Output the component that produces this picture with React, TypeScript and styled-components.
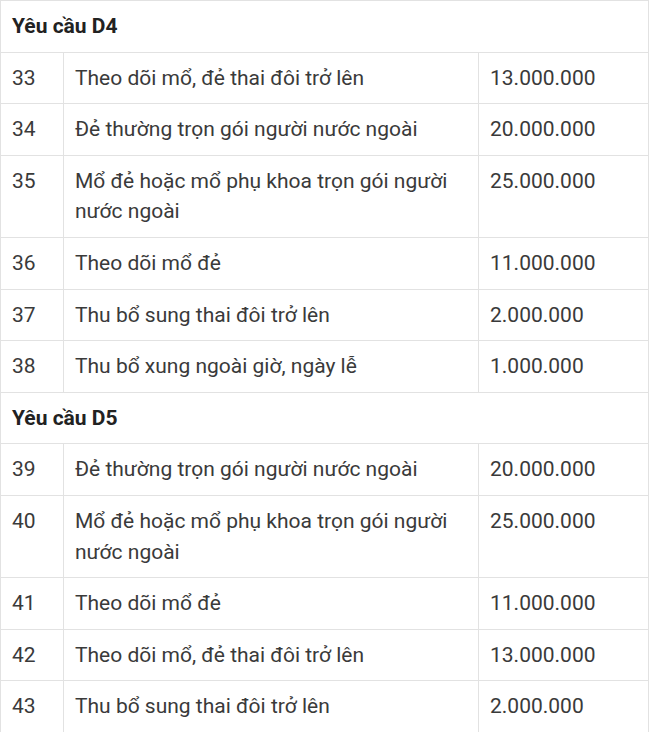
import styled, { createGlobalStyle } from "styled-components";

const GlobalStyle = createGlobalStyle`
  html, body {
    margin: 0;
    padding: 0;
    background: #fff;
  }
`;

const Table = styled.table`
  width: 649px;
  border-collapse: collapse;
  font-family: Roboto, "Noto Sans", sans-serif;
  font-size: 21px;
  line-height: 30.6px;
  color: #3a3a3a;
  table-layout: fixed;
`;

const Cell = styled.td`
  border: 1px solid #e2e2e2;
  padding: 10px 11px;
  vertical-align: top;
  text-align: left;
`;

const GroupCell = styled(Cell)`
  font-weight: 700;
  color: #222;
`;

type Row = [string, string, string];

const groups: { title: string; rows: Row[] }[] = [
  {
    title: "Yêu cầu D4",
    rows: [
      ["33", "Theo dõi mổ, đẻ thai đôi trở lên", "13.000.000"],
      ["34", "Đẻ thường trọn gói người nước ngoài", "20.000.000"],
      ["35", "Mổ đẻ hoặc mổ phụ khoa trọn gói người nước ngoài", "25.000.000"],
      ["36", "Theo dõi mổ đẻ", "11.000.000"],
      ["37", "Thu bổ sung thai đôi trở lên", "2.000.000"],
      ["38", "Thu bổ xung ngoài giờ, ngày lễ", "1.000.000"],
    ],
  },
  {
    title: "Yêu cầu D5",
    rows: [
      ["39", "Đẻ thường trọn gói người nước ngoài", "20.000.000"],
      ["40", "Mổ đẻ hoặc mổ phụ khoa trọn gói người nước ngoài", "25.000.000"],
      ["41", "Theo dõi mổ đẻ", "11.000.000"],
      ["42", "Theo dõi mổ, đẻ thai đôi trở lên", "13.000.000"],
      ["43", "Thu bổ sung thai đôi trở lên", "2.000.000"],
    ],
  },
];

const App = () => {
  return (
    <>
      <GlobalStyle />
      <Table>
        <colgroup>
          <col style={{ width: 63 }} />
          <col style={{ width: 415 }} />
          <col />
        </colgroup>
        <tbody>
          {groups.map((g) => (
            <>
              <tr key={g.title}>
                <GroupCell colSpan={3}>{g.title}</GroupCell>
              </tr>
              {g.rows.map(([no, name, price]) => (
                <tr key={no}>
                  <Cell>{no}</Cell>
                  <Cell>{name}</Cell>
                  <Cell>{price}</Cell>
                </tr>
              ))}
            </>
          ))}
        </tbody>
      </Table>
    </>
  );
};

export default App;
